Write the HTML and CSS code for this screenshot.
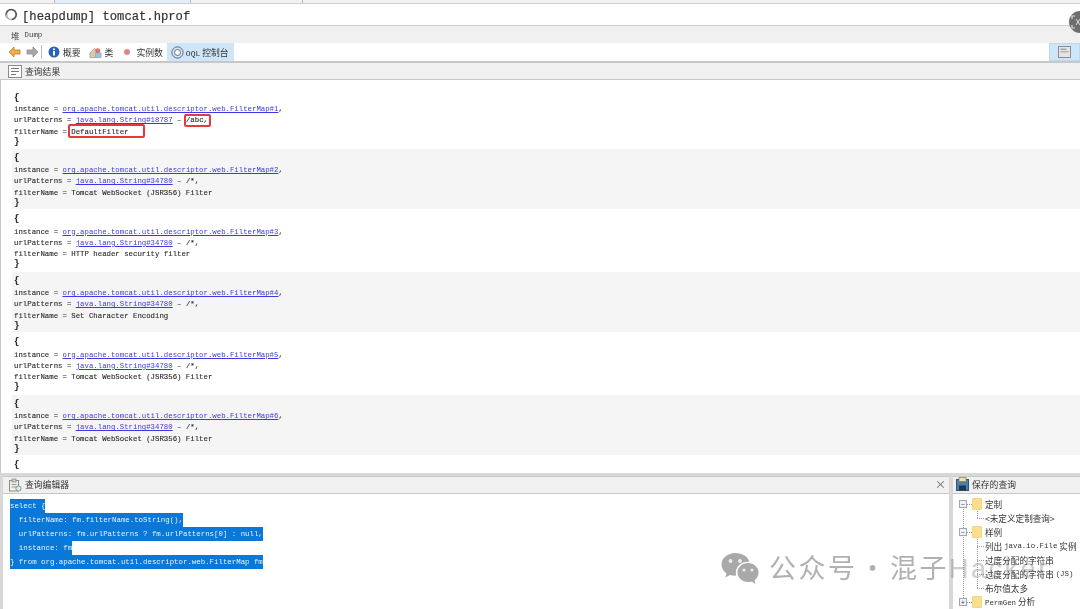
FILE: index.html
```html
<!DOCTYPE html>
<html lang="zh">
<head>
<meta charset="utf-8">
<title>tomcat.hprof</title>
<link rel="stylesheet" href="styles.css">
</head>
<body>
<div class="app">
  <div class="tabstrip">
    <div class="tab t1"></div><div class="tab t2"></div><div class="tab t3"></div>
  </div>
  <div class="titlebar">
    <svg class="spin" width="13" height="13" viewBox="0 0 13 13"><path d="M2.2 9.5A5 5 0 1 1 6.5 11.5" fill="none" stroke="#555" stroke-width="1.7"/><path d="M1.5 6.5A5 5 0 0 0 6.5 11.5" fill="none" stroke="#bbb" stroke-width="1.7"/></svg>
    <span class="title">[heapdump] tomcat.hprof</span>
  </div>
  <div class="dumpbar"><span class="cjk">堆</span> <span class="mono">Dump</span></div>
  <div class="toolbar">
    <div class="nav">
      <svg width="13" height="12" viewBox="0 0 13 12"><path d="M6 1 1 6l5 5V8h6V4H6z" fill="#f2b04a" stroke="#b97a1e" stroke-width=".8"/></svg>
      <svg width="13" height="12" viewBox="0 0 13 12"><path d="M7 1l5 5-5 5V8H1V4h6z" fill="#a8a8a8" stroke="#8a8a8a" stroke-width=".8"/></svg>
      <span class="sep"></span>
    </div>
    <button class="tool"><svg width="12" height="12" viewBox="0 0 12 12"><circle cx="6" cy="6" r="5.5" fill="#2a62b8"/><rect x="5" y="5" width="2" height="4.5" fill="#fff"/><rect x="5" y="2.5" width="2" height="1.6" fill="#fff"/></svg><span>概要</span></button>
    <button class="tool"><svg width="13" height="13" viewBox="0 0 14 13"><path d="M1 7l5-5 3 3v7H1z" fill="#dcc9a8" stroke="#8f8f8f" stroke-width=".7"/><circle cx="9.5" cy="4.5" r="2.7" fill="#e2574c" opacity=".8"/><rect x="7" y="7" width="6" height="5" fill="#9cc0e6" stroke="#7a9cc0" stroke-width=".6"/></svg><span>类</span></button>
    <button class="tool"><svg width="12" height="12" viewBox="0 0 12 12"><circle cx="6" cy="6" r="2.800" fill="#e77f7f" stroke="#cfa0a0" stroke-width=".8"/></svg><span>实例数</span></button>
    <button class="tool active"><svg width="13" height="13" viewBox="0 0 13 13"><circle cx="6.500" cy="6.500" r="5.600" fill="#dfe5ee" stroke="#55688a" stroke-width="1"/><circle cx="6.500" cy="6.500" r="3" fill="#fff" stroke="#55688a" stroke-width="1"/></svg><span><span class="mono oql">OQL</span> 控制台</span></button>
    <span class="spacer"></span>
    <div class="viewbtn"><svg width="13" height="12" viewBox="0 0 13 12"><rect x=".5" y=".5" width="12" height="11" fill="#e4e4e4" stroke="#8c8c8c"/><rect x="2.500" y="2.500" width="6" height="1.500" fill="#a4a4a4"/><rect x="2.500" y="5" width="8" height="1.500" fill="#b4b4b4"/></svg></div>
  </div>
  <div class="panehead results-head">
    <svg width="14" height="13" viewBox="0 0 14 13"><rect x=".5" y=".5" width="13" height="12" fill="#fff" stroke="#8b8b8b"/><path d="M3 3.500h8M3 6.500h8M3 9.500h5" stroke="#777"/></svg>
    <span>查询结果</span>
  </div>
  <div class="results">
    <div class="rec first">
      <div class="open"><b>{</b></div>
      <div>instance = <a>org.apache.tomcat.util.descriptor.web.FilterMap#1</a>,</div>
      <div>urlPatterns = <a>java.lang.String#18787</a> – <span class="mark mark-a">/abc,</span></div>
      <div>filterName = <span class="mark mark-b">DefaultFilter</span></div>
      <div class="shut"><b>}</b></div>
    </div>
    <div class="rec alt">
      <div class="open"><b>{</b></div>
      <div>instance = <a>org.apache.tomcat.util.descriptor.web.FilterMap#2</a>,</div>
      <div>urlPatterns = <a>java.lang.String#34780</a> – /*,</div>
      <div>filterName = Tomcat WebSocket (JSR356) Filter</div>
      <div class="shut"><b>}</b></div>
    </div>
    <div class="rec">
      <div class="open"><b>{</b></div>
      <div>instance = <a>org.apache.tomcat.util.descriptor.web.FilterMap#3</a>,</div>
      <div>urlPatterns = <a>java.lang.String#34780</a> – /*,</div>
      <div>filterName = HTTP header security filter</div>
      <div class="shut"><b>}</b></div>
    </div>
    <div class="rec alt">
      <div class="open"><b>{</b></div>
      <div>instance = <a>org.apache.tomcat.util.descriptor.web.FilterMap#4</a>,</div>
      <div>urlPatterns = <a>java.lang.String#34780</a> – /*,</div>
      <div>filterName = Set Character Encoding</div>
      <div class="shut"><b>}</b></div>
    </div>
    <div class="rec">
      <div class="open"><b>{</b></div>
      <div>instance = <a>org.apache.tomcat.util.descriptor.web.FilterMap#5</a>,</div>
      <div>urlPatterns = <a>java.lang.String#34780</a> – /*,</div>
      <div>filterName = Tomcat WebSocket (JSR356) Filter</div>
      <div class="shut"><b>}</b></div>
    </div>
    <div class="rec alt">
      <div class="open"><b>{</b></div>
      <div>instance = <a>org.apache.tomcat.util.descriptor.web.FilterMap#6</a>,</div>
      <div>urlPatterns = <a>java.lang.String#34780</a> – /*,</div>
      <div>filterName = Tomcat WebSocket (JSR356) Filter</div>
      <div class="shut"><b>}</b></div>
    </div>
    <div class="rec">
      <div class="open"><b>{</b></div>
    </div>
  </div>
  <div class="bottom">
    <section class="editor">
      <div class="panehead">
        <svg width="14" height="14" viewBox="0 0 14 14"><rect x="1.500" y="2.500" width="9" height="10.500" fill="#f3efe2" stroke="#8a8a8a"/><rect x="4" y="1" width="4" height="3" fill="#c9c9c9" stroke="#8a8a8a" stroke-width=".7"/><path d="M3.500 6.500h5M3.500 9h5" stroke="#999"/><circle cx="10.500" cy="10.500" r="2.600" fill="#e8e8e8" stroke="#7c93b2"/></svg>
        <span>查询编辑器</span>
        <span class="spacer"></span>
        <span class="close">×</span>
      </div>
      <div class="code">
        <span class="sel">select {</span>
        <span class="sel">  filterName: fm.filterName.toString(),</span>
        <span class="sel">  urlPatterns: fm.urlPatterns ? fm.urlPatterns[0] : null,</span>
        <span class="sel">  instance: fm</span>
        <span class="sel">} from org.apache.tomcat.util.descriptor.web.FilterMap fm</span>
      </div>
    </section>
    <section class="saved">
      <div class="panehead">
        <svg width="13" height="14" viewBox="0 0 13 14"><rect x=".5" y="2.500" width="12" height="11" fill="#4d7ea8" stroke="#33566f"/><rect x="3" y=".5" width="7" height="4" fill="#f0dfb0" stroke="#8a7a50" stroke-width=".7"/><rect x="3" y="8.500" width="7" height="5" fill="#1d3a52"/></svg>
        <span>保存的查询</span>
      </div>
      <ul class="tree">
        <li class="folder"><i class="toggle">−</i><i class="fold"></i><span>定制</span></li>
        <li class="leaf">&lt;未定义定制查询&gt;</li>
        <li class="folder"><i class="toggle">−</i><i class="fold"></i><span>样例</span></li>
        <li class="leaf">列出 <span class="mono">java.io.File</span> 实例</li>
        <li class="leaf">过度分配的字符串</li>
        <li class="leaf">过度分配的字符串 <span class="mono">(JS)</span></li>
        <li class="leaf">布尔值太多</li>
        <li class="folder"><i class="toggle">+</i><i class="fold"></i><span><span class="mono">PermGen</span> 分析</span></li>
      </ul>
    </section>
  </div>
  <div class="watermark">
    <svg width="40" height="33" viewBox="0 0 39 33"><path d="M15 1C7 1 1 6.200 1 12.600c0 3.600 1.900 6.700 5 8.800L4.800 25.500 9.500 23c1.600.5 3.300.7 5 .7.400 0 .8 0 1.200-.1-.3-1-.4-2-.4-3 0-6 5.500-10.800 12.500-10.800h1C27.600 4.600 21.900 1 15 1z" fill="#a9a9a9"/><path d="M38 20.500C38 15.200 33 11 27.500 11S17 15.200 17 20.500 21.900 30 27.500 30c1.300 0 2.500-.2 3.700-.6L35 32l-1-3.600c2.500-1.800 4-4.600 4-7.900z" fill="#a9a9a9"/><circle cx="10" cy="9" r="1.900" fill="#eee"/><circle cx="19.500" cy="9" r="1.900" fill="#eee"/><circle cx="23.500" cy="18" r="1.500" fill="#eee"/><circle cx="31.500" cy="18" r="1.500" fill="#eee"/></svg>
    <span>公众号 · 混子<span class="faint">Hacker</span></span>
  </div>
  <div class="avatar">
    <svg width="14" height="14" viewBox="0 0 14 14"><path d="M1 4V1h3M10 1h3v3M13 10v3h-3M4 13H1v-3" fill="none" stroke="#ddd" stroke-width="1.200"/><path d="M5 4l4 6M9 4l-4 6" stroke="#ddd" stroke-width="1"/></svg>
  </div>
</div>
</body>
</html>
```
FILE: styles.css
```css
* { box-sizing: border-box; }
html, body { margin: 0; padding: 0; background: #fff; }
body { width: 1080px; height: 609px; overflow: hidden; }
.app {
  position: relative;
  width: 1080px;
  height: 609px;
  overflow: hidden;
  display: flex;
  flex-direction: column;
  font-family: "Noto Sans CJK SC", "Noto Sans", sans-serif;
  color: #333;
  filter: blur(0.35px);
}
.mono { font-family: "Liberation Mono", "Noto Sans CJK SC", monospace; font-size: 7.4px; }
.oql { font-size: 8px; }
.cjk { font-family: "Noto Sans CJK SC", sans-serif; }
.spacer { flex: 1; }

.tabstrip { height: 4px; display: flex; background: #f2f2f2; border-bottom: 1px solid #cfcfcf; }
.tab { height: 3px; border-right: 1px solid #b8b8b8; }
.t1 { width: 55px; }
.t2 { width: 136px; background: #e3eef9; }
.t3 { width: 112px; }

.titlebar {
  height: 22px;
  display: flex;
  align-items: center;
  gap: 4px;
  padding: 4px 0 0 5px;
  background: #fff;
  border-bottom: 1px solid #cfcfcf;
}
.spin { margin-top: -5px; }
.title {
  font-family: "Liberation Mono", monospace;
  font-size: 12.2px;
  color: #333;
  -webkit-text-stroke: 0.2px #333;
}
.dumpbar {
  height: 17px;
  padding-left: 11px;
  display: flex;
  align-items: center;
  gap: 5px;
  background: #f0f0f0;
  font-size: 8.5px;
  color: #444;
}
.toolbar {
  height: 20px;
  display: flex;
  align-items: center;
  padding-left: 8px;
  gap: 8px;
  background: #fff;
  border-bottom: 2px solid #c8c8c8;
}
.nav { display: flex; align-items: center; gap: 5px; width: 34px; margin-right: -2px; }
.sep { width: 1px; height: 14px; background: #bbb; flex: none; margin-left: -3px; }
.tool {
  height: 18px;
  border: 0;
  background: transparent;
  padding: 0;
  display: flex;
  align-items: center;
  gap: 3px;
  font: inherit;
  font-size: 8.8px;
  color: #333;
}
.tool.active { background: #cfe6f8; padding: 0 5px 0 4px; margin-left: -4px; gap: 2px; }
.viewbtn {
  width: 31px;
  height: 18px;
  background: #cfe6f8;
  border: 1px solid #bcd9f2;
  display: flex;
  align-items: center;
  justify-content: center;
}
.panehead {
  height: 18px;
  display: flex;
  align-items: center;
  gap: 3px;
  padding-left: 8px;
  background: #f0f0f0;
  border-bottom: 1px solid #c8c8c8;
  font-size: 8.8px;
  color: #333;
}
.results-head { height: 17px; }
.results {
  height: 393px;
  padding: 9px 0 0 11px;
  background: #fff;
  border-left: 1px solid #c8c8c8;
  font-family: "Liberation Mono", "Noto Sans CJK SC", monospace;
  font-size: 7.35px;
  color: #2a2a2a;
  -webkit-text-stroke: 0.12px #2a2a2a;
  overflow: hidden;
}
.rec { height: 61.5px; padding: 3.5px 0 0 2px; line-height: 11.2px; white-space: nowrap; }
.rec.first { height: 60px; }
.rec.alt { background: #f5f5f5; height: 60px; margin-bottom: 1.5px; }
.rec .open { height: 12.7px; }
.rec.first .open { height: 11.7px; }
.rec .shut { margin-top: -1px; }
.rec a { color: #3a3ae0; text-decoration: underline; -webkit-text-stroke: 0; }
.rec b { font-size: 9px; line-height: 11.2px; }

.mark { position: relative; }
.mark::after {
  content: "";
  position: absolute;
  border: 2px solid #e8393a;
  border-radius: 2px;
}
.mark-a::after { left: -2px; right: -3px; top: -2px; bottom: -3px; }
.mark-b::after { left: -3px; right: -16px; top: -4px; bottom: -2px; }

.bottom {
  flex: 1;
  min-height: 0;
  display: flex;
  gap: 4px;
  padding-top: 3px;
  background: #d8d8d8;
  overflow: hidden;
}
.editor { flex: 1; display: flex; flex-direction: column; background: #fff; border-left: 3px solid #d8d8d8; }
.editor .panehead { padding-left: 5px; border-top: 1px solid #c8c8c8; padding-bottom: 1px; }
.close { padding-right: 3px; font-size: 11px; color: #666; line-height: 1; }
.code {
  flex: 1;
  padding: 5px 0 0 7px;
  font-family: "Liberation Mono", monospace;
  font-size: 7.4px;
}
.sel {
  display: block;
  width: fit-content;
  height: 14px;
  line-height: 14px;
  background: #0a78d8;
  color: #e8f2fc;
  white-space: pre;
}
.saved { width: 127px; flex: none; display: flex; flex-direction: column; background: #fff; }
.saved .panehead { padding-left: 3px; border-top: 1px solid #c8c8c8; white-space: nowrap; padding-bottom: 1px; }
.tree {
  list-style: none;
  margin: 0;
  padding: 3.5px 0 0 6px;
  font-size: 8.6px;
  color: #333;
  white-space: nowrap;
  position: relative;
}
.tree::before {
  content: "";
  position: absolute;
  left: 10px;
  top: 12px;
  height: 92px;
  border-left: 1px dotted #999;
}
.tree li { position: relative; height: 14px; line-height: 14px; display: flex; align-items: center; white-space: pre; }
.tree li.leaf { padding-left: 26px; }
.tree li.leaf::before {
  content: "";
  position: absolute;
  left: 18px;
  width: 7px;
  top: 7px;
  border-top: 1px dotted #999;
}
.tree li.leaf::after {
  content: "";
  position: absolute;
  left: 18px;
  top: -7px;
  height: 14px;
  border-left: 1px dotted #999;
}
.tree li.folder::before {
  content: "";
  position: absolute;
  left: 8px;
  width: 5px;
  top: 7px;
  border-top: 1px dotted #999;
}
.toggle {
  position: relative;
  z-index: 1;
  width: 8px; height: 8px;
  border: 1px solid #a0a8b4;
  background: #eef1f6;
  font-style: normal;
  font-size: 7px;
  line-height: 6px;
  text-align: center;
  color: #445;
  margin-right: 5px;
  flex: none;
}
.fold { position: relative; z-index: 1; width: 10px; height: 12px; background: #fbdf8e; border: 1px solid #f3d680; border-radius: 1px; flex: none; margin-right: 3px; }

.watermark {
  position: absolute;
  left: 720px;
  top: 549px;
  display: flex;
  align-items: center;
  gap: 9px;
  font-family: "Noto Sans CJK SC", sans-serif;
  font-size: 27px;
  letter-spacing: 2.5px;
  word-spacing: -7px;
  line-height: 36px;
  color: rgba(120, 120, 120, 0.58);
  white-space: nowrap;
}
.faint { font-family: "Liberation Sans", sans-serif; color: rgba(120, 120, 120, 0.36); }
.avatar {
  position: absolute;
  left: 1069px;
  top: 11px;
  width: 22px;
  height: 22px;
  border-radius: 50%;
  background: #6e6e6e;
  display: flex;
  align-items: center;
  padding-left: 2px;
}
```
